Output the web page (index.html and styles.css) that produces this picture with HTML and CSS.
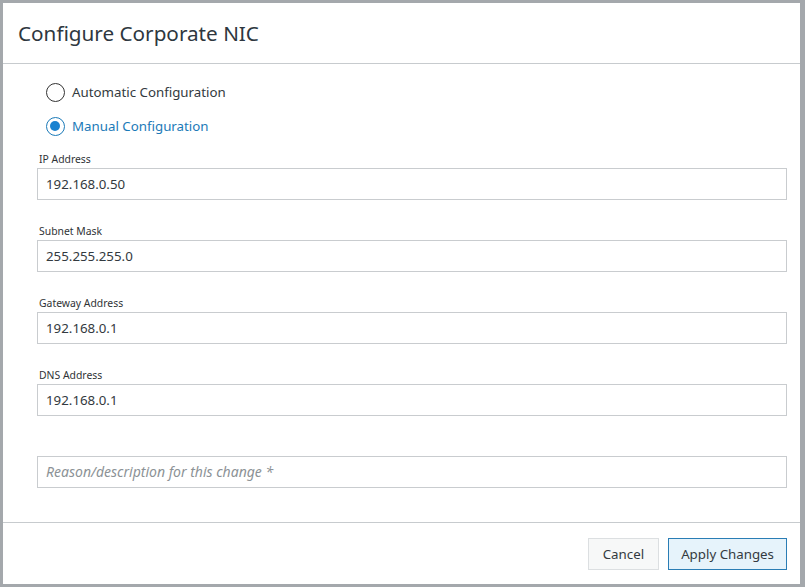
FILE: index.html
```html
<!DOCTYPE html>
<html lang="en">
<head>
  <meta charset="UTF-8">
  <title>Configure Corporate NIC</title>
  <link rel="stylesheet" href="styles.css">
</head>
<body>
  <div class="backdrop">
    <div class="modal">
      <div class="modal-header">
        <h1>Configure Corporate NIC</h1>
      </div>

      <div class="modal-body">
        <div class="radio-group">
          <label class="radio-option">
            <span class="radio"></span>
            <span>Automatic Configuration</span>
          </label>
          <label class="radio-option selected">
            <span class="radio"></span>
            <span>Manual Configuration</span>
          </label>
        </div>

        <div class="field">
          <div class="field-label">IP Address</div>
          <div class="field-input">192.168.0.50</div>
        </div>
        <div class="field">
          <div class="field-label">Subnet Mask</div>
          <div class="field-input">255.255.255.0</div>
        </div>
        <div class="field">
          <div class="field-label">Gateway Address</div>
          <div class="field-input">192.168.0.1</div>
        </div>
        <div class="field">
          <div class="field-label">DNS Address</div>
          <div class="field-input">192.168.0.1</div>
        </div>

        <div class="field reason">
          <div class="field-input placeholder">Reason/description for this change *</div>
        </div>
      </div>

      <div class="modal-footer">
        <button class="btn btn-cancel">Cancel</button>
        <button class="btn btn-primary">Apply Changes</button>
      </div>
    </div>
  </div>
</body>
</html>
```

FILE: styles.css
```css
:root {
  --text: #333a40;
  --title: #2e3740;
  --blue: #1b7ab8;
  --line: #c7cbce;
  --input-border: #c9cccf;
  --backdrop: #a4a8ac;
}

* {
  margin: 0;
  padding: 0;
  box-sizing: border-box;
}

body {
  font-family: 'Noto Sans', 'Open Sans', sans-serif;
  background: var(--backdrop);
  color: var(--text);
}

.backdrop {
  width: 805px;
  height: 587px;
  padding: 3px 5px 3px 3px;
}

.modal {
  height: 100%;
  background: #fff;
  display: flex;
  flex-direction: column;
}

.modal-header {
  height: 61px;
  border-bottom: 1px solid var(--line);
  padding: 15px 15px 0;
}

.modal-header h1 {
  font-size: 20.7px;
  font-weight: 400;
  color: var(--title);
  line-height: 30px;
}

.modal-body {
  flex: 1;
  padding: 17px 13px 0 34px;
}

.radio-group {
  display: flex;
  flex-direction: column;
  gap: 12px;
  padding-left: 9px;
  margin-bottom: 15px;
}

.radio-option {
  display: flex;
  align-items: center;
  gap: 7px;
  font-size: 13.3px;
  height: 22px;
  cursor: pointer;
}

.radio {
  width: 19px;
  height: 19px;
  border: 1.5px solid #333;
  border-radius: 50%;
  position: relative;
}

.radio-option.selected {
  color: var(--blue);
}

.radio-option.selected .radio {
  border-color: var(--blue);
}

.radio-option.selected .radio::after {
  content: '';
  position: absolute;
  top: 3px;
  left: 3px;
  width: 10px;
  height: 10px;
  border-radius: 50%;
  background: #1a82d0;
}

.field {
  margin-bottom: 24px;
}

.field-label {
  font-size: 10.4px;
  line-height: 14px;
  margin-left: 2px;
  margin-bottom: 2px;
  color: #2f3336;
}

.field-input {
  height: 32px;
  border: 1px solid var(--input-border);
  padding: 0 8px;
  font-size: 13.3px;
  line-height: 30px;
  color: var(--text);
}

.field.reason {
  margin-top: 40px;
}

.field-input.placeholder {
  font-size: 14px;
  font-style: italic;
  color: #8c9296;
}

.modal-footer {
  height: 62px;
  border-top: 1px solid var(--line);
  display: flex;
  justify-content: flex-end;
  align-items: center;
  gap: 9px;
  padding: 0 13px 0 0;
}

.btn {
  font-family: inherit;
  font-size: 13.3px;
  height: 32px;
  color: var(--text);
  cursor: pointer;
}

.btn-cancel {
  padding: 0 14px;
  background: #f7f8f8;
  border: 1px solid #dcdfe1;
}

.btn-primary {
  padding: 0 12px;
  background: #e6f3fb;
  border: 1px solid #2a7db5;
}
```
